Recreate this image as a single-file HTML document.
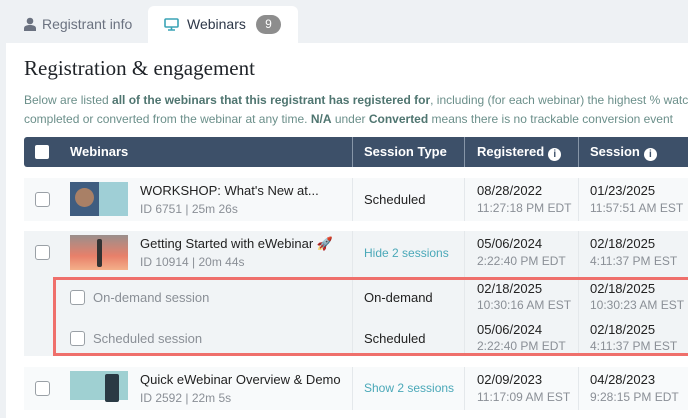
<!DOCTYPE html><html><head><style>
*{margin:0;padding:0;box-sizing:border-box}
body{width:688px;height:418px;overflow:hidden;background:#eef1f4;font-family:"Liberation Sans",sans-serif;position:relative}
.a{position:absolute;white-space:nowrap}
.cb{position:absolute;width:15px;height:15px;border:1.5px solid #9aa0a6;border-radius:3px;background:#fff}
.t1{font-size:13px;color:#222}
.t2{font-size:12px;color:#8a8f96}
.sep{position:absolute;width:1px;background:#e4e8eb}
.i{display:inline-block;width:13px;height:13px;border-radius:50%;background:#fff;color:#3d5069;font-size:10px;text-align:center;line-height:13px;vertical-align:-1px;margin-left:4px}
</style></head><body>
<div class="a" style="left:148px;top:6px;width:150px;height:40px;background:#fff;border-radius:6px 6px 0 0"></div>
<svg class="a" style="left:24px;top:17px" width="12" height="14" viewBox="0 0 12 14"><circle cx="6" cy="4" r="3.3" fill="#6b7280"/><path d="M0 14v-2.5C0 9 2.5 8 6 8s6 1 6 3.5V14z" fill="#6b7280"/></svg>
<div class="a" style="left:42px;top:16px;font-size:14px;color:#6b7280">Registrant info</div>
<svg class="a" style="left:164px;top:18px" width="15" height="13" viewBox="0 0 15 13"><rect x="1" y="1" width="13" height="8" rx="1" fill="none" stroke="#3aa3b5" stroke-width="1.6"/><path d="M4 12h7M7.5 9v3" stroke="#3aa3b5" stroke-width="1.6"/></svg>
<div class="a" style="left:187px;top:16px;font-size:14px;color:#2d3748">Webinars</div>
<div class="a" style="left:256px;top:15px;width:25px;height:19px;border-radius:10px;background:#8d8d8d;color:#fff;font-size:12px;text-align:center;line-height:19px">9</div>
<div class="a" style="left:6px;top:43px;width:682px;height:375px;background:#fff"></div>
<div class="a" style="left:24px;top:56px;font-family:'Liberation Serif',serif;font-size:21px;color:#1f2328">Registration &amp; engagement</div>
<div class="a" style="left:24px;top:91px;font-size:12px;color:#6b8f8a;line-height:19px">Below are listed <b style="color:#4f7570">all of the webinars that this registrant has registered for</b>, including (for each webinar) the highest % watch<br>completed or converted from the webinar at any time. <b style="color:#4f7570">N/A</b> under <b style="color:#4f7570">Converted</b> means there is no trackable conversion event</div>
<div class="a" style="left:24px;top:137px;width:664px;height:30px;background:#3d5069;border-radius:3px 0 0 3px"></div>
<div class="a" style="left:352px;top:137px;width:1px;height:30px;background:#8796a8"></div>
<div class="a" style="left:464px;top:137px;width:1px;height:30px;background:#8796a8"></div>
<div class="a" style="left:578px;top:137px;width:1px;height:30px;background:#8796a8"></div>
<div class="a" style="left:35px;top:145px;width:14px;height:14px;background:#fff;border-radius:2px"></div>
<div class="a" style="left:70px;top:144px;font-size:13px;font-weight:bold;color:#fff">Webinars</div>
<div class="a" style="left:364px;top:144px;font-size:13px;font-weight:bold;color:#fff">Session Type</div>
<div class="a" style="left:477px;top:144px;font-size:13px;font-weight:bold;color:#fff">Registered<span class="i">i</span></div>
<div class="a" style="left:590px;top:144px;font-size:13px;font-weight:bold;color:#fff">Session<span class="i">i</span></div>
<!-- row1 -->
<div class="a" style="left:24px;top:178px;width:664px;height:43px;background:#f7f9fa"></div>
<div class="sep" style="left:352px;top:178px;height:43px"></div><div class="sep" style="left:464px;top:178px;height:43px"></div><div class="sep" style="left:578px;top:178px;height:43px"></div>
<div class="cb" style="left:35px;top:192px"></div>
<div class="a" style="left:70px;top:182px;width:58px;height:34px;background:#9fcfd6"><div style="width:29px;height:34px;background:#3f5d80"></div><div style="position:absolute;left:5px;top:6px;width:19px;height:19px;border-radius:50%;background:#a98066"></div></div>
<div class="a t1" style="left:140px;top:183px">WORKSHOP: What's New at...</div>
<div class="a t2" style="left:140px;top:202px">ID 6751 | 25m 26s</div>
<div class="a t1" style="left:364px;top:192px">Scheduled</div>
<div class="a t1" style="left:477px;top:183px">08/28/2022</div><div class="a t2" style="left:477px;top:201px">11:27:18 PM EDT</div>
<div class="a t1" style="left:590px;top:183px">01/23/2025</div><div class="a t2" style="left:590px;top:201px">11:57:51 AM EST</div>
<!-- row2 -->
<div class="a" style="left:24px;top:231px;width:664px;height:125px;background:#f1f4f6"></div>
<div class="sep" style="left:352px;top:231px;height:125px"></div><div class="sep" style="left:464px;top:231px;height:125px"></div><div class="sep" style="left:578px;top:231px;height:125px"></div>
<div class="cb" style="left:35px;top:245px"></div>
<div class="a" style="left:70px;top:235px;width:58px;height:35px;background:linear-gradient(#9a8f8c,#e8806a 60%,#f4b08a)"><div style="position:absolute;left:27px;top:4px;width:5px;height:28px;background:#333;border-radius:2px"></div></div>
<div class="a t1" style="left:140px;top:236px">Getting Started with eWebinar 🚀</div>
<div class="a t2" style="left:140px;top:255px">ID 10914 | 20m 44s</div>
<div class="a" style="left:364px;top:246px;font-size:12px;color:#4aa8b8">Hide 2 sessions</div>
<div class="a t1" style="left:477px;top:236px">05/06/2024</div><div class="a t2" style="left:477px;top:254px">2:22:40 PM EDT</div>
<div class="a t1" style="left:590px;top:236px">02/18/2025</div><div class="a t2" style="left:590px;top:254px">4:11:37 PM EST</div>
<div class="a" style="left:53px;top:277px;width:650px;height:79px;border:3px solid #ef6f6b"></div>
<div class="cb" style="left:70px;top:290px"></div>
<div class="a" style="left:93px;top:290px;font-size:13px;color:#8a8f96">On-demand session</div>
<div class="a t1" style="left:364px;top:290px">On-demand</div>
<div class="a t1" style="left:477px;top:281px">02/18/2025</div><div class="a t2" style="left:477px;top:298px">10:30:16 AM EST</div>
<div class="a t1" style="left:590px;top:281px">02/18/2025</div><div class="a t2" style="left:590px;top:298px">10:30:23 AM EST</div>
<div class="cb" style="left:70px;top:331px"></div>
<div class="a" style="left:93px;top:331px;font-size:13px;color:#8a8f96">Scheduled session</div>
<div class="a t1" style="left:364px;top:331px">Scheduled</div>
<div class="a t1" style="left:477px;top:322px">05/06/2024</div><div class="a t2" style="left:477px;top:339px">2:22:40 PM EDT</div>
<div class="a t1" style="left:590px;top:322px">02/18/2025</div><div class="a t2" style="left:590px;top:339px">4:11:37 PM EST</div>
<!-- row3 -->
<div class="a" style="left:24px;top:367px;width:664px;height:43px;background:#f8fafb"></div>
<div class="sep" style="left:352px;top:367px;height:43px"></div><div class="sep" style="left:464px;top:367px;height:43px"></div><div class="sep" style="left:578px;top:367px;height:43px"></div>
<div class="cb" style="left:35px;top:381px"></div>
<div class="a" style="left:70px;top:371px;width:58px;height:29px;background:#9fd0d2"><div style="position:absolute;left:35px;top:3px;width:14px;height:28px;background:#2a3a44;border-radius:2px"></div></div>
<div class="a t1" style="left:140px;top:372px">Quick eWebinar Overview &amp; Demo</div>
<div class="a t2" style="left:140px;top:391px">ID 2592 | 22m 5s</div>
<div class="a" style="left:364px;top:381px;font-size:12px;color:#4aa8b8">Show 2 sessions</div>
<div class="a t1" style="left:477px;top:372px">02/09/2023</div><div class="a t2" style="left:477px;top:390px">11:17:09 AM EST</div>
<div class="a t1" style="left:590px;top:372px">04/28/2023</div><div class="a t2" style="left:590px;top:390px">9:28:15 PM EDT</div>
</body></html>
